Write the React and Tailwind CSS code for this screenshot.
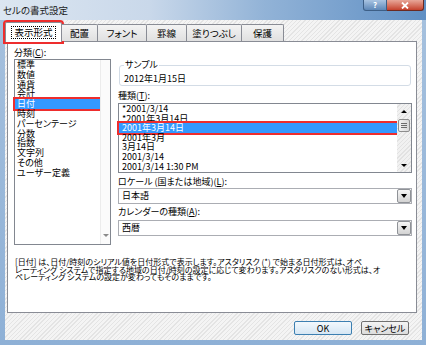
import React from "react";

const tabs = [
  { label: "表示形式", w: "w-[57px]", sel: true },
  { label: "配置", w: "w-[36px]" },
  { label: "フォント", w: "w-[49px]" },
  { label: "罫線", w: "w-[40px]" },
  { label: "塗りつぶし", w: "w-[55px]" },
  { label: "保護", w: "w-[42px]" },
];

const categories = [
  "標準",
  "数値",
  "通貨",
  "会計",
  "日付",
  "時刻",
  "パーセンテージ",
  "分数",
  "指数",
  "文字列",
  "その他",
  "ユーザー定義",
];

const formats = [
  "*2001/3/14",
  "*2001年3月14日",
  "2001年3月14日",
  "2001年3月",
  "3月14日",
  "2001/3/14",
  "2001/3/14 1:30 PM",
];

const DownTri = ({ c = "border-t-black" }) => (
  <span className={`w-0 h-0 border-x-[3px] border-x-transparent border-t-[3px] ${c}`} />
);

const Combo = ({ value }) => (
  <div className="h-[16px] flex border border-[#abadb3] bg-white">
    <div className="flex-1 pl-[3px] leading-[14px]">{value}</div>
    <div className="w-[14px] h-[14px] border border-[#8f9297] rounded-[2px] bg-gradient-to-b from-[#f6f6f6] to-[#d3d3d3] flex items-center justify-center">
      <span className="w-0 h-0 border-x-[3.5px] border-x-transparent border-t-[4px] border-t-black" />
    </div>
  </div>
);

export default function App() {
  return (
    <div className="w-[426px] h-[345px] flex flex-col bg-gradient-to-b from-[#a6c1de] to-[#8eb0d6] font-['Noto_Sans_CJK_JP',sans-serif] text-[9px] text-black [font-feature-settings:'palt'] overflow-hidden">
      {/* title bar */}
      <div className="h-[20px] flex items-start justify-between bg-[linear-gradient(to_right,#dce6f1_0%,#c9d8ea_35%,#92b3d7_62%,#5f8fc4_100%)]">
        <div className="pl-[3px] pt-[3px] text-[9.5px] leading-[14px] text-[#1b1b1b]">セルの書式設定</div>
        <div className="flex mr-[2px]">
          <div className="w-[24px] h-[11px] rounded-bl-[3px] border border-t-0 border-[#3d5f86] bg-gradient-to-b from-[#a9c4e2] to-[#5e88b8] flex items-center justify-center text-white text-[8px] font-bold leading-none">
            ?
          </div>
          <div className="w-[37px] h-[11px] rounded-br-[3px] border border-t-0 border-l-0 border-[#6b2a22] bg-gradient-to-b from-[#e7a699] to-[#c4402c] flex items-center justify-center">
            <svg width="8" height="7" viewBox="0 0 8 7">
              <path d="M1 0.5 L7 6.5 M7 0.5 L1 6.5" stroke="#fff" strokeWidth="1.8" />
            </svg>
          </div>
        </div>
      </div>

      {/* client */}
      <div className="ml-[5px] mr-[4px] mb-[5px] flex-1 flex flex-col pt-[2px] bg-[repeating-linear-gradient(135deg,#f4f4f4_0px,#f4f4f4_2px,#e4e4e4_2px,#e4e4e4_3px)]">
        <div className="flex items-end h-[20px] -mb-px relative z-10">
          {tabs.map((t) =>
            t.sel ? (
              <div
                key={t.label}
                className={`${t.w} h-[20px] bg-white border border-b-0 border-[#898c95] rounded-t-[2px] flex items-center justify-center outline-2 outline-[#ee2d2d]`}
              >
                <span className="border border-dotted border-black px-[2px] leading-[11px] text-[9.5px]">{t.label}</span>
              </div>
            ) : (
              <div
                key={t.label}
                className={`${t.w} h-[17px] mb-px border-t border-r border-[#898c95] rounded-tr-[2px] bg-gradient-to-b from-[#f3f3f3] to-[#e0e0e0] flex items-center justify-center text-[9.5px] leading-[12px]`}
              >
                {t.label}
              </div>
            )
          )}
        </div>

        <div className="ml-[2px] w-[410px] h-[272px] border border-[#898c95] bg-white flex flex-col">
          <div className="flex">
            {/* left column */}
            <div className="pl-[6px] pt-[5px] w-[104px]">
              <div className="leading-[12px]">分類(<span className="underline">C</span>):</div>
              <div className="w-[97px] h-[186px] border border-[#828790] flex">
                <div className="flex-1 flex flex-col pt-0">
                  {categories.map((c) => (
                    <div
                      key={c}
                      className={
                        c === "日付"
                          ? "pl-[2px] leading-[9.8px] bg-[#3399ff] text-white outline-2 outline-[#ee2d2d]"
                          : "pl-[2px] leading-[9.8px] whitespace-nowrap"
                      }
                    >
                      {c}
                    </div>
                  ))}
                </div>
                <div className="w-[10px] border-l border-[#ececec] bg-[#fbfbfb] flex flex-col justify-end items-center pb-[7px]">
                  <DownTri c="border-t-[#8a8a8a]" />
                </div>
              </div>
            </div>

            {/* right column */}
            <div className="ml-[6px] w-[294px] flex flex-col">
              <fieldset className="mt-[17px] mx-[1px] border border-[#d3dce6] rounded-[3px] px-[4px]">
                <legend className="ml-[0px] px-[1px] leading-[12px]">サンプル</legend>
                <div className="pt-[2px] leading-[12px] h-[14px]">2012年1月15日</div>
              </fieldset>

              <div className="mt-[4px] leading-[12px]">種類(<span className="underline">T</span>):</div>
              <div className="mt-px h-[70px] border border-[#828790] flex">
                <div className="flex-1 flex flex-col">
                  {formats.map((f, i) => (
                    <div
                      key={f}
                      className={
                        i === 2
                          ? "pl-[3px] leading-[9.6px] whitespace-nowrap bg-[#3399ff] text-white outline-2 outline-[#ee2d2d]"
                          : "pl-[3px] leading-[9.6px] whitespace-nowrap"
                      }
                    >
                      {f}
                    </div>
                  ))}
                </div>
                <div className="w-[14px] flex flex-col items-center bg-[repeating-linear-gradient(135deg,#f1f1f1_0px,#f1f1f1_2px,#e2e2e2_2px,#e2e2e2_3px)]">
                  <div className="h-[14px] flex items-center justify-center">
                    <span className="w-0 h-0 border-x-[3px] border-x-transparent border-b-[3px] border-b-black" />
                  </div>
                  <div className="mt-px w-[12px] h-[13px] border border-[#8d8d8d] rounded-[2px] bg-gradient-to-r from-[#f3f3f3] to-[#d9d9d9] flex flex-col items-center justify-center gap-[1px]">
                    <span className="w-[6px] h-px bg-[#6d6d6d]" />
                    <span className="w-[6px] h-px bg-[#6d6d6d]" />
                    <span className="w-[6px] h-px bg-[#6d6d6d]" />
                  </div>
                  <div className="flex-1" />
                  <div className="h-[14px] flex items-center justify-center">
                    <DownTri />
                  </div>
                </div>
              </div>

              <div className="mt-[3px] leading-[12px]">
                ロケール (国または地域)(<span className="underline">L</span>):
              </div>
              <Combo value="日本語" />
              <div className="mt-[2px] leading-[12px]">
                カレンダーの種類(<span className="underline">A</span>):
              </div>
              <div className="mt-[2px]">
                <Combo value="西暦" />
              </div>
            </div>
          </div>

          <div className="mt-[13px] pl-[7px] text-[8px] leading-[7.5px] whitespace-nowrap">
            <div>[日付] は、日付/時刻のシリアル値を日付形式で表示します。アスタリスク (*) で始まる日付形式は、オペ</div>
            <div>レーティング システムで指定する地域の日付/時刻の設定に応じて変わります。アスタリスクのない形式は、オ</div>
            <div>ペレーティング システムの設定が変わってもそのままです。</div>
          </div>
        </div>

        <div className="flex justify-end gap-[9px] mt-[8px] mr-[13px]">
          <div className="w-[58px] h-[14px] border border-[#3c7fb1] rounded-[2px] bg-gradient-to-b from-[#f2f8fd] to-[#d6e6f3] flex items-center justify-center leading-none">
            OK
          </div>
          <div className="w-[48px] h-[14px] border border-[#707070] rounded-[2px] bg-gradient-to-b from-[#f4f4f4] to-[#dcdcdc] flex items-center justify-center leading-none">
            キャンセル
          </div>
        </div>
      </div>
    </div>
  );
}
